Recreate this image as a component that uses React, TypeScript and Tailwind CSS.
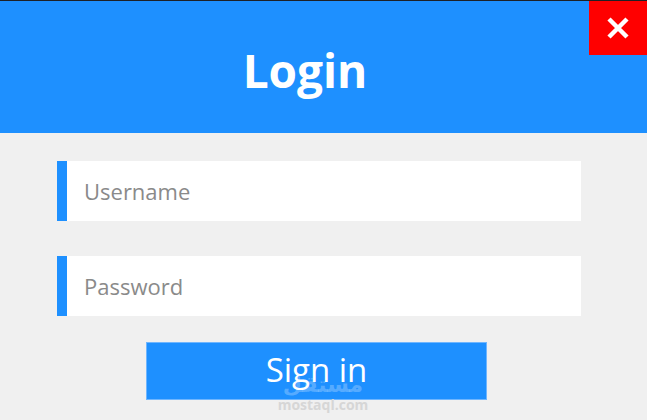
import React from "react";

export default function App() {
  return (
    <div
      className="relative w-[647px] h-[420px] overflow-hidden bg-[#f0f0f0] flex flex-col"
      style={{ fontFamily: '"Open Sans", "Noto Sans", sans-serif' }}
    >
      <div className="h-px bg-[#1e2126] shrink-0" />
      <header className="relative h-[132px] shrink-0 bg-[#1e90ff] flex items-center justify-center pr-[37px]">
        <h1 className="text-[46px] font-bold text-white leading-none mt-[6px]">Login</h1>
        <button className="absolute top-0 right-0 w-[58px] h-[54px] bg-[#ff0000] flex items-center justify-center">
          <svg width="26" height="24" viewBox="0 0 26 24">
            <path d="M4 3 L22 21 M22 3 L4 21" stroke="#fff" strokeWidth="4.5" strokeLinecap="butt" />
          </svg>
        </button>
      </header>

      <div className="flex flex-col pl-[57px] pr-[66px] pt-[28px]">
        <div className="h-[60px] bg-white border-l-[10px] border-[#1e90ff] flex items-center">
          <input
            placeholder="Username"
            className="w-full h-full pl-[17px] bg-transparent outline-none text-[22px] text-[#555] placeholder:text-[#8a8a8a]"
          />
        </div>
        <div className="h-[60px] mt-[35px] bg-white border-l-[10px] border-[#1e90ff] flex items-center">
          <input
            type="password"
            placeholder="Password"
            className="w-full h-full pl-[17px] bg-transparent outline-none text-[22px] text-[#555] placeholder:text-[#8a8a8a]"
          />
        </div>
      </div>

      <div className="flex pl-[146px] pt-[26px]">
        <button className="w-[341px] h-[58px] bg-[#1e90ff] border border-[#6fb6ff] text-white text-[33px] leading-none flex items-center justify-center pb-[3px]">
          Sign in
        </button>
      </div>

      <div className="absolute left-[263px] top-[374px] w-[120px] flex flex-col items-center pointer-events-none">
        <span
          className="text-[22px] font-bold leading-none text-white/25"
          style={{ fontFamily: '"DejaVu Sans", sans-serif' }}
        >
          مستقل
        </span>
        <span className="text-[14px] font-bold leading-none mt-[2px] text-[#d6d6d6]">mostaql.com</span>
      </div>
    </div>
  );
}
